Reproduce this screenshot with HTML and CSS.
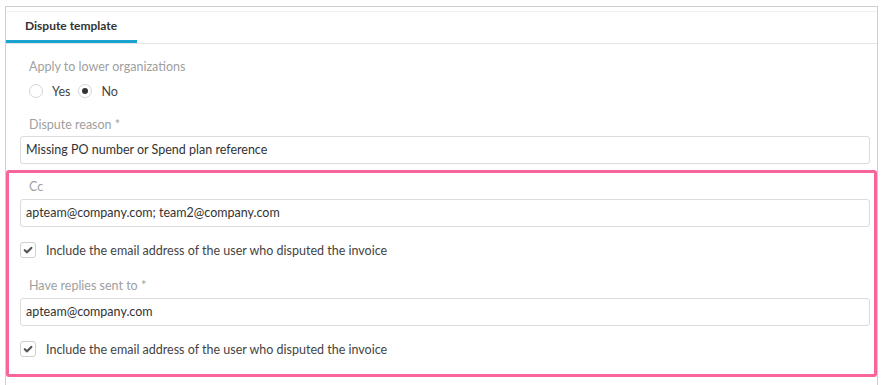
FILE: index.html
```html
<!DOCTYPE html>
<html lang="en">
<head>
<meta charset="utf-8">
<title>Dispute template</title>
<link rel="stylesheet" href="styles.css">
</head>
<body>
<div class="panel">
  <div class="tabbar">
    <div class="tab">Dispute template</div>
  </div>
  <div class="body">
    <div class="section">
      <div class="label">Apply to lower organizations</div>
      <div class="radios">
        <span class="radio"></span><span class="radio-text">Yes</span>
        <span class="radio checked"></span><span class="radio-text">No</span>
      </div>
      <div class="label label-reason">Dispute reason *</div>
      <div class="input">Missing PO number or Spend plan reference</div>
    </div>
    <div class="highlight">
      <div class="label">Cc</div>
      <div class="input">apteam@company.com; team2@company.com</div>
      <div class="check-row">
        <span class="checkbox"><svg viewBox="0 0 16 16" width="16" height="16"><path d="M4.3 8.3 L6.9 10.7 L11.8 5.6" fill="none" stroke="#555" stroke-width="2.5" stroke-linecap="round" stroke-linejoin="round"/></svg></span>
        <span class="check-text">Include the email address of the user who disputed the invoice</span>
      </div>
      <div class="label label-replies">Have replies sent to *</div>
      <div class="input">apteam@company.com</div>
      <div class="check-row check-row-last">
        <span class="checkbox"><svg viewBox="0 0 16 16" width="16" height="16"><path d="M4.3 8.3 L6.9 10.7 L11.8 5.6" fill="none" stroke="#555" stroke-width="2.5" stroke-linecap="round" stroke-linejoin="round"/></svg></span>
        <span class="check-text">Include the email address of the user who disputed the invoice</span>
      </div>
    </div>
  </div>
</div>
</body>
</html>
```

FILE: styles.css
```css
html, body {
  margin: 0;
  padding: 0;
  background: #fff;
}
body {
  font-family: Lato, "Noto Sans", sans-serif;
  font-size: 12.5px;
  color: #333;
}
.panel {
  margin: 6px 4px 0 5px;
  border: 1px solid #cfcfcf;
  border-bottom: none;
  padding-top: 4px;
  height: 379px;
  box-sizing: border-box;
}
.tabbar {
  border-top: 1px solid #f0f0f0;
  border-bottom: 1px solid #e6e6e6;
  height: 31px;
  display: flex;
}
.tab {
  width: 131px;
  box-sizing: border-box;
  padding-left: 19px;
  line-height: 28px;
  height: 31px;
  border-bottom: 3px solid #17a2d0;
  font-weight: 700;
  font-size: 12px;
  color: #333;
}
.body {
  padding-top: 14px;
}
.section {
  padding: 0 7px 0 14px;
}
.label {
  line-height: 18px;
  padding-left: 9px;
  color: #a0a0a0;
}
.radios {
  display: flex;
  align-items: center;
  height: 18px;
  margin-top: 6px;
  padding-left: 9px;
}
.radio {
  width: 14px;
  height: 14px;
  box-sizing: border-box;
  border: 1px solid #d6d6d6;
  border-radius: 50%;
  position: relative;
  flex: none;
}
.radio.checked::after {
  content: "";
  position: absolute;
  left: 3px;
  top: 3px;
  width: 6px;
  height: 6px;
  border-radius: 50%;
  background: #333;
}
.radio-text {
  margin-left: 9px;
  margin-right: 8px;
  color: #444;
}
.label-reason {
  margin-top: 16px;
}
.input {
  margin-top: 2px;
  height: 28px;
  box-sizing: border-box;
  border: 1px solid #dcdcdc;
  border-radius: 3px;
  padding-left: 5px;
  line-height: 26px;
  color: #333;
  background: #fff;
}
.highlight {
  margin-top: 6px;
  border: 3px solid #f7659a;
  border-radius: 3px;
  padding: 5px 4px 17px 11px;
}
.highlight .input {
  margin-top: 3px;
}
.check-row {
  display: flex;
  align-items: center;
  height: 16px;
  margin-top: 15px;
}
.check-row-last {
  margin-top: 15px;
}
.checkbox {
  width: 16px;
  height: 16px;
  box-sizing: border-box;
  border: 1px solid #d0d0d0;
  border-radius: 3px;
  display: flex;
  align-items: center;
  justify-content: center;
  flex: none;
}
.checkbox svg {
  display: block;
}
.check-text {
  margin-left: 10px;
  color: #444;
}
.label-replies {
  margin-top: 19px;
}
```
